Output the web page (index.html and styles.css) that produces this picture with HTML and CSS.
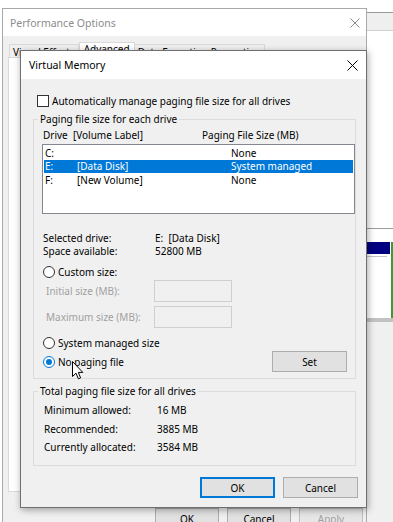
FILE: index.html
```html
<!DOCTYPE html>
<html>
<head>
<meta charset="utf-8">
<title>Virtual Memory</title>
<link rel="stylesheet" href="styles.css">
</head>
<body>
<div class="desk">
  <div class="backwin">
    <div class="bw-top"></div>
    <div class="bw-bar"></div>
    <div class="bw-white"></div>
    <div class="bw-list">
      <div class="bw-box">
        <div class="bw-sel"></div>
        <div class="bw-rule"></div>
      </div>
    </div>
    <div class="bw-bottom"></div>
  </div>

  <div class="perf">
    <div class="perf-title">
      <span>Performance Options</span>
      <svg class="perf-close" width="10" height="10" viewBox="0 0 10 10"><path d="M0.5 0.5L9.5 9.5M9.5 0.5L0.5 9.5" stroke="#8a8a8a" stroke-width="1"/></svg>
    </div>
    <div class="tabs">
      <div class="tab tab-ve">Visual Effects</div>
      <div class="tab tab-adv">Advanced</div>
      <div class="tab tab-dep">Data Execution Prevention</div>
    </div>
    <div class="panel"></div>
    <div class="perf-buttons">
      <div class="pbtn">OK</div>
      <div class="pbtn">Cancel</div>
      <div class="pbtn disabled">Apply</div>
    </div>
  </div>

  <div class="vm">
    <div class="vm-title">
      <span>Virtual Memory</span>
      <svg class="vm-close" width="11" height="11" viewBox="0 0 11 11"><path d="M0.5 0.5L10.5 10.5M10.5 0.5L0.5 10.5" stroke="#000" stroke-width="1"/></svg>
    </div>
    <div class="vm-body">
      <div class="check-row">
        <span class="checkbox"></span>
        <span>Automatically manage paging file size for all drives</span>
      </div>

      <fieldset class="group group-drives">
        <legend>Paging file size for each drive</legend>
        <div class="cols">
          <span class="col-a">Drive&nbsp; [Volume Label]</span>
          <span>Paging File Size (MB)</span>
        </div>
        <div class="listbox">
          <div class="lrow"><span class="c1">C:</span><span class="c2"></span><span>None</span></div>
          <div class="lrow sel"><span class="c1">E:</span><span class="c2">[Data Disk]</span><span>System managed</span></div>
          <div class="lrow"><span class="c1">F:</span><span class="c2">[New Volume]</span><span>None</span></div>
        </div>
        <div class="info">
          <div class="irow"><span class="ilabel">Selected drive:</span><span>E:&nbsp; [Data Disk]</span></div>
          <div class="irow"><span class="ilabel">Space available:</span><span>52800 MB</span></div>
        </div>
        <div class="radio-row custom">
          <span class="radio"></span><span>Custom size:</span>
        </div>
        <div class="size-row">
          <span class="slabel">Initial size (MB):</span><span class="sinput"></span>
        </div>
        <div class="size-row second">
          <span class="slabel">Maximum size (MB):</span><span class="sinput"></span>
        </div>
        <div class="radio-row sysman">
          <span class="radio"></span><span>System managed size</span>
        </div>
        <div class="nopage-row">
          <div class="radio-inline"><span class="radio on"></span><span>No paging file</span></div>
          <div class="btn set">Set</div>
        </div>
      </fieldset>

      <fieldset class="group group-total">
        <legend>Total paging file size for all drives</legend>
        <div class="trow"><span class="tlabel">Minimum allowed:</span><span>16 MB</span></div>
        <div class="trow"><span class="tlabel">Recommended:</span><span>3885 MB</span></div>
        <div class="trow"><span class="tlabel">Currently allocated:</span><span>3584 MB</span></div>
      </fieldset>

      <div class="vm-buttons">
        <div class="btn default">OK</div>
        <div class="btn">Cancel</div>
      </div>
    </div>
  </div>

  <svg class="cursor" width="12" height="19" viewBox="0 0 12 19"><path d="M0.5 0.5V15.5L4 12.2L6.4 17.8L8.6 16.9L6.3 11.4H10.8Z" fill="#fff" stroke="#000" stroke-width="1" stroke-linejoin="round"/></svg>
</div>
</body>
</html>
```

FILE: styles.css
```css
* { box-sizing: border-box; }
html, body { margin: 0; padding: 0; }
body {
  width: 393px;
  height: 522px;
  overflow: hidden;
  background: #fff;
  font-family: "Noto Sans", "Open Sans", sans-serif;
  font-size: 10px;
  color: #000;
}
.desk { position: relative; width: 393px; height: 522px; overflow: hidden; background: #fff; }

/* background window on the right */
.backwin {
  position: absolute; left: 360px; top: 0; width: 33px; height: 522px;
  display: flex; flex-direction: column;
}
.bw-top { height: 12px; background: #fff; }
.bw-bar { height: 19px; background: #efefef; border-top: 1px solid #9a9a9a; border-bottom: 1px solid #cfcfcf; }
.bw-white { height: 197px; background: #fff; }
.bw-list {
  height: 94px; background: #fff;
  border-top: 1px solid #9c9c9c; border-bottom: 4px solid #c2c2c2;
  padding-top: 13px;
}
.bw-box { height: 76px; border-right: 2px solid #3a9a3a; padding-left: 7px; }
.bw-sel { height: 12px; width: 23px; background: #000080; }
.bw-rule { height: 1px; width: 20px; margin-top: 2px; background: #c4c4c4; }
.bw-bottom { flex: 1; background: #f0f0f0; }

/* Performance Options window */
.perf {
  position: absolute; left: 2px; top: 8px; width: 365px; height: 530px;
  background: #f0f0f0; border: 1px solid #a9a9a9;
}
.perf-title {
  height: 27px; background: #fff;
  display: flex; align-items: center; justify-content: space-between;
  padding: 0 6px 0 7px; color: #8c8c8c; font-size: 10.5px;
}
.tabs { display: flex; align-items: flex-end; padding: 6px 0 0 6px; height: 21px; }
.tab {
  height: 13px; line-height: 14px; border: 1px solid #d9d9d9; border-bottom: none;
  background: #f0f0f0; padding: 0 3px; white-space: nowrap;
}
.tab-adv { height: 15px; line-height: 12px; background: #fff; padding: 0 4px; }
.tab-dep { border-left: none; }
.panel {
  height: 435px; margin: 0 4px 0 5px;
  background: #fff; border: 1px solid #d9d9d9;
}
.perf-buttons {
  display: flex; justify-content: flex-end; gap: 8px;
  margin-top: 16px; padding-right: 3px;
}
.pbtn {
  width: 64px; height: 21px; background: #e1e1e1; border: 1px solid #adadad;
  display: flex; align-items: center; justify-content: center;
}
.pbtn.disabled { color: #a0a0a0; background: #e6e6e6; border-color: #bfbfbf; }

/* Virtual Memory dialog */
.vm {
  position: absolute; left: 20px; top: 50px; width: 347px;
  border: 1px solid #6f6f6f; background: #f0f0f0;
  box-shadow: 1px 2px 7px rgba(0,0,0,0.35);
}
.vm-title {
  height: 28px; background: #fff;
  display: flex; align-items: center; justify-content: space-between;
  padding: 0 8px 0 8px; font-size: 10.5px;
}
.vm-body { padding: 15px 10px 9px 12px; }

.check-row { display: flex; align-items: center; height: 13px; padding-left: 4px; gap: 3px; }
.checkbox { width: 12px; height: 12px; border: 1px solid #333; background: #fff; }

.group { margin: 0; padding: 0; border: 1px solid #dcdcdc; min-width: 0; }
.group legend { padding: 0 2px; margin-left: 4px; line-height: 14px; }
.group-drives { margin-top: 5px; padding-bottom: 6px; }

.cols { height: 18px; display: flex; align-items: center; padding-left: 9px; }
.col-a { width: 159px; }

.listbox {
  height: 70px; margin-left: 8px; background: #fff; border: 1px solid #828790;
  padding-top: 1px;
}
.lrow { height: 13.5px; display: flex; align-items: center; margin: 0 1px; padding-left: 1px; white-space: nowrap; }
.lrow .c1 { width: 32px; }
.lrow .c2 { width: 154px; }
.lrow.sel { background: #0078d7; color: #fff; }

.info { margin-top: 17.5px; }
.irow { height: 13px; display: flex; align-items: center; padding-left: 9px; }
.ilabel { width: 112px; }

.radio-row { height: 16px; display: flex; align-items: center; gap: 3px; padding-left: 9px; }
.radio-row.custom { margin-top: 6.5px; }
.radio-row.sysman { margin-top: 7px; }
.radio {
  width: 12px; height: 12px; border-radius: 50%; border: 1px solid #333; background: #fff;
  display: inline-flex; align-items: center; justify-content: center;
}
.radio.on { border-color: #0078d7; }
.radio.on::after { content: ""; width: 6px; height: 6px; border-radius: 50%; background: #0078d7; }

.size-row { height: 22px; display: flex; align-items: center; padding-left: 12px; color: #a0a0a0; }
.size-row.second { margin-top: 4px; }
.slabel { width: 108px; }
.sinput { width: 78px; height: 22px; border: 1px solid #cfcfcf; background: #f0f0f0; }

.nopage-row { height: 21px; display: flex; align-items: center; justify-content: space-between; padding-left: 9px; padding-right: 8px; }
.radio-inline { display: flex; align-items: center; gap: 3px; }

.btn {
  width: 75px; height: 21px; background: #e1e1e1; border: 1px solid #adadad;
  display: flex; align-items: center; justify-content: center;
}
.btn.default { border: 2px solid #0078d7; }

.group-total { margin-top: 5px; padding: 2.75px 0 8.75px 0; }
.trow { height: 18.5px; display: flex; align-items: center; padding-left: 10px; }
.tlabel { width: 113px; }

.vm-buttons { display: flex; justify-content: flex-end; gap: 8px; margin-top: 11px; margin-right: -2px; }

.cursor { position: absolute; left: 72px; top: 361px; }
```
